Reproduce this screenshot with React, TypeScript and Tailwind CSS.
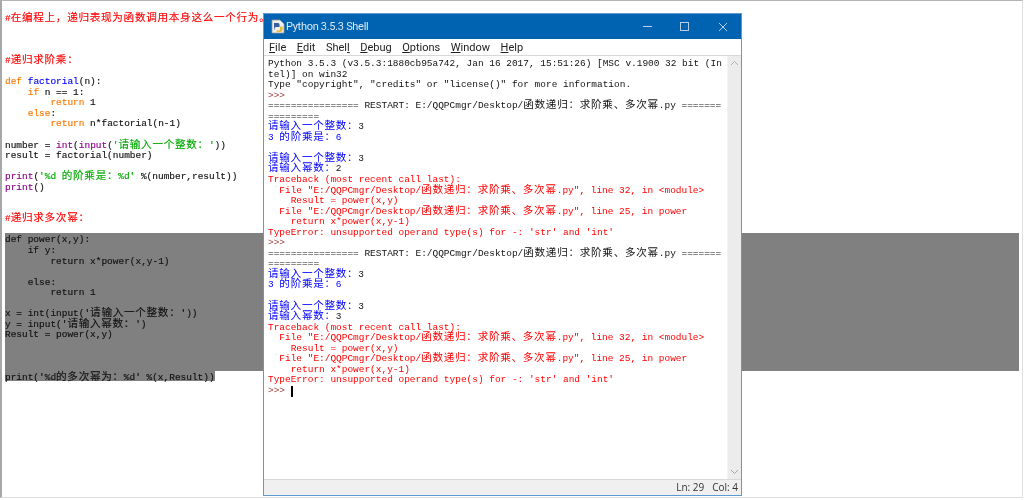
import React from "react";

type Seg = [string, string?];

const colorClass: Record<string, string> = {
  k: "text-[#ff7700]",
  d: "text-[#0000ff]",
  s: "text-[#00aa00]",
  b: "text-[#900090]",
  r: "text-[#ff0000]",
  o: "text-[#0000ff]",
  p: "text-[#a04040]",
  x: "text-[#222222]",
};

function Run({ text, c }: { text: string; c?: string }) {
  const parts = text.split(/([\u3000-\u9fff\uff00-\uffef]+)/);
  return (
    <span className={c ? colorClass[c] : undefined}>
      {parts.map((t, i) =>
        i % 2 === 1 ? (
          <span key={i} className="text-[10.6px] leading-[0px] tracking-[0.7px] font-['Noto_Sans_CJK_SC','Liberation_Mono',monospace]">
            {t}
          </span>
        ) : (
          <span key={i}>{t}</span>
        )
      )}
    </span>
  );
}

function Line({ segs, low }: { segs: Seg[]; low?: boolean }) {
  return (
    <div className={low ? "h-[10.55px] whitespace-pre pt-[2px]" : "h-[10.55px] whitespace-pre"}>
      {segs.map((s, i) => (
        <Run key={i} text={s[0]} c={s[1]} />
      ))}
      {segs.length === 0 ? " " : null}
    </div>
  );
}

const top: Seg[][] = [
  [["#在编程上，递归表现为函数调用本身这么一个行为。", "r"]],
  [],
  [],
  [],
  [["#递归求阶乘：", "r"]],
  [],
  [["def ", "k"], ["factorial", "d"], ["(n):"]],
  [["    "], ["if", "k"], [" n == 1:"]],
  [["        "], ["return", "k"], [" 1"]],
  [["    "], ["else", "k"], [":"]],
  [["        "], ["return", "k"], [" n*factorial(n-1)"]],
  [],
  [["number = "], ["int", "b"], ["("], ["input", "b"], ["("], ["'请输入一个整数：'", "s"], ["))"]],
  [["result = factorial(number)"]],
  [],
  [["print", "b"], ["("], ["'%d 的阶乘是：%d'", "s"], [" %(number,result))"]],
  [["print", "b"], ["()"]],
  [],
  [],
  [["#递归求多次幂：", "r"]],
  [],
];

const selected: string[] = [
  "def power(x,y):",
  "    if y:",
  "        return x*power(x,y-1)",
  "",
  "    else:",
  "        return 1",
  "",
  "x = int(input('请输入一个整数：'))",
  "y = input('请输入幂数：')",
  "Result = power(x,y)",
  "",
  "",
  "",
];

const file = "E:/QQPCmgr/Desktop/函数递归：求阶乘、多次幂.py";
const restart: Seg[][] = [
  [["================ RESTART: " + file + " ======="]],
  [["========="]],
];

const shell: Seg[][] = [
  [["Python 3.5.3 (v3.5.3:1880cb95a742, Jan 16 2017, 15:51:26) [MSC v.1900 32 bit (In"]],
  [["tel)] on win32"]],
  [['Type "copyright", "credits" or "license()" for more information.']],
  [[">>> ", "p"]],
  ...restart,
  [["请输入一个整数：", "o"], ["3"]],
  [["3 的阶乘是：6", "o"]],
  [],
  [["请输入一个整数：", "o"], ["3"]],
  [["请输入幂数：", "o"], ["2"]],
  [["Traceback (most recent call last):", "r"]],
  [['  File "' + file + '", line 32, in <module>', "r"]],
  [["    Result = power(x,y)", "r"]],
  [['  File "' + file + '", line 25, in power', "r"]],
  [["    return x*power(x,y-1)", "r"]],
  [["TypeError: unsupported operand type(s) for -: 'str' and 'int'", "r"]],
  [[">>> ", "p"]],
  ...restart,
  [["请输入一个整数：", "o"], ["3"]],
  [["3 的阶乘是：6", "o"]],
  [],
  [["请输入一个整数：", "o"], ["3"]],
  [["请输入幂数：", "o"], ["3"]],
  [["Traceback (most recent call last):", "r"]],
  [['  File "' + file + '", line 32, in <module>', "r"]],
  [["    Result = power(x,y)", "r"]],
  [['  File "' + file + '", line 25, in power', "r"]],
  [["    return x*power(x,y-1)", "r"]],
  [["TypeError: unsupported operand type(s) for -: 'str' and 'int'", "r"]],
];

const menus: [string, string][] = [
  ["F", "ile"],
  ["E", "dit"],
  ["Shel", "l"],
  ["D", "ebug"],
  ["O", "ptions"],
  ["W", "indow"],
  ["H", "elp"],
];

function PyIcon() {
  return (
    <svg width="14" height="15" viewBox="0 0 14 15">
      <path d="M1 1h8l4 4v9H1z" fill="#f0f0f0" stroke="#9a9a9a" strokeWidth="0.8" />
      <path d="M3 4h4a1.500 1.500 0 0 1 1.500 1.500V8H5a1.500 1.500 0 0 0-1.500 1.500V11H3z" fill="#35609a" />
      <path d="M9 7.500h2.500v3A2.500 2.500 0 0 1 9 13H5.500v-1.500H8a1 1 0 0 0 1-1z" fill="#e8bb30" />
    </svg>
  );
}

export default function App() {
  return (
    <div className="relative w-[1024px] h-[500px] overflow-hidden bg-white font-['Liberation_Mono',monospace] text-[9.46px] leading-[10.55px] text-[#111111] [-webkit-text-stroke:0.15px]">
      <div className="h-[498px] mr-[1px] border-l-2 border-l-[#a8a8a8] border-t border-t-[#b4b4b4] border-r border-r-[#e0e0e0] border-b border-b-[#dcdcdc] pt-[11px] pl-[3px] pr-[3px] blur-[0.35px]">
        {top.map((l, i) => (
          <Line key={i} segs={l} low />
        ))}
        <div className="bg-[#808080]">
          {selected.map((t, i) => (
            <Line key={i} segs={[[t]]} low />
          ))}
        </div>
        <div className="bg-[#808080] w-[210px]">
          <Line segs={[["print('%d的多次幂为：%d' %(x,Result))"]]} low />
        </div>
      </div>

      <div className="absolute left-[263px] top-[13px] w-[479px] h-[483px] flex flex-col bg-white border border-[#5b9bd5] [-webkit-text-stroke:0px]">
        <div className="h-[25px] bg-[#0063b1] flex items-center pl-[7px] shrink-0">
          <PyIcon />
          <span className="ml-[1px] font-['Roboto',sans-serif] text-[11px] tracking-[-0.3px] text-white/85 leading-none blur-[0.3px]">Python 3.5.3 Shell</span>
          <div className="ml-auto flex items-center">
            <div className="w-[38px] h-[25px] flex items-center justify-center pr-[2px]">
              <div className="w-[9px] h-px bg-white/70" />
            </div>
            <div className="w-[38px] h-[25px] flex items-center justify-center pr-[3px]">
              <div className="w-[9px] h-[9px] border border-white/70" />
            </div>
            <div className="w-[36px] h-[25px] flex items-center justify-center">
              <svg width="10" height="10" viewBox="0 0 10 10" className="text-white/70">
                <path d="M1 1l8 8M9 1l-8 8" stroke="currentColor" strokeWidth="1" />
              </svg>
            </div>
          </div>
        </div>
        <div className="h-[17px] shrink-0 flex items-center gap-[10.5px] pl-[5px] font-['Roboto',sans-serif] text-[11px] text-[#222222] border-b border-[#d8d8d8] blur-[0.3px]">
          {menus.map((m) => (
            <span key={m[0]} className="leading-none">
              <span className={m[0] === "Shel" ? "" : "underline"}>{m[0]}</span>
              <span className={m[0] === "Shel" ? "underline" : ""}>{m[1]}</span>
            </span>
          ))}
        </div>
        <div className="flex-1 flex min-h-0">
          <div className="flex-1 pl-[4px] pt-[3px] blur-[0.35px] overflow-hidden">
            {shell.map((l, i) => (
              <Line key={i} segs={l} />
            ))}
            <div className="h-[10.55px] flex items-center whitespace-pre">
              <span className={colorClass.p}>{">>> "}</span>
              <span className="w-[2px] h-[11px] bg-black" />
            </div>
          </div>
          <div className="w-[14px] shrink-0 bg-[#ececec] border-l border-[#f4f4f4] flex flex-col items-center justify-between py-[4px]">
            <svg width="9" height="6" viewBox="0 0 9 6"><path d="M1 5l3.500-3.500L8 5" fill="none" stroke="#b0b0b0" strokeWidth="1" /></svg>
            <svg width="9" height="6" viewBox="0 0 9 6"><path d="M1 1l3.500 3.500L8 1" fill="none" stroke="#a6a6a6" strokeWidth="1" /></svg>
          </div>
        </div>
        <div className="h-[16px] shrink-0 bg-[#f0f0f0] border-t border-[#d8d8d8] flex items-center justify-end gap-[8px] pr-[3px] font-['Open_Sans',sans-serif] text-[10px] text-[#333333] blur-[0.3px]">
          <span>Ln: 29</span>
          <span>Col: 4</span>
        </div>
      </div>
    </div>
  );
}
